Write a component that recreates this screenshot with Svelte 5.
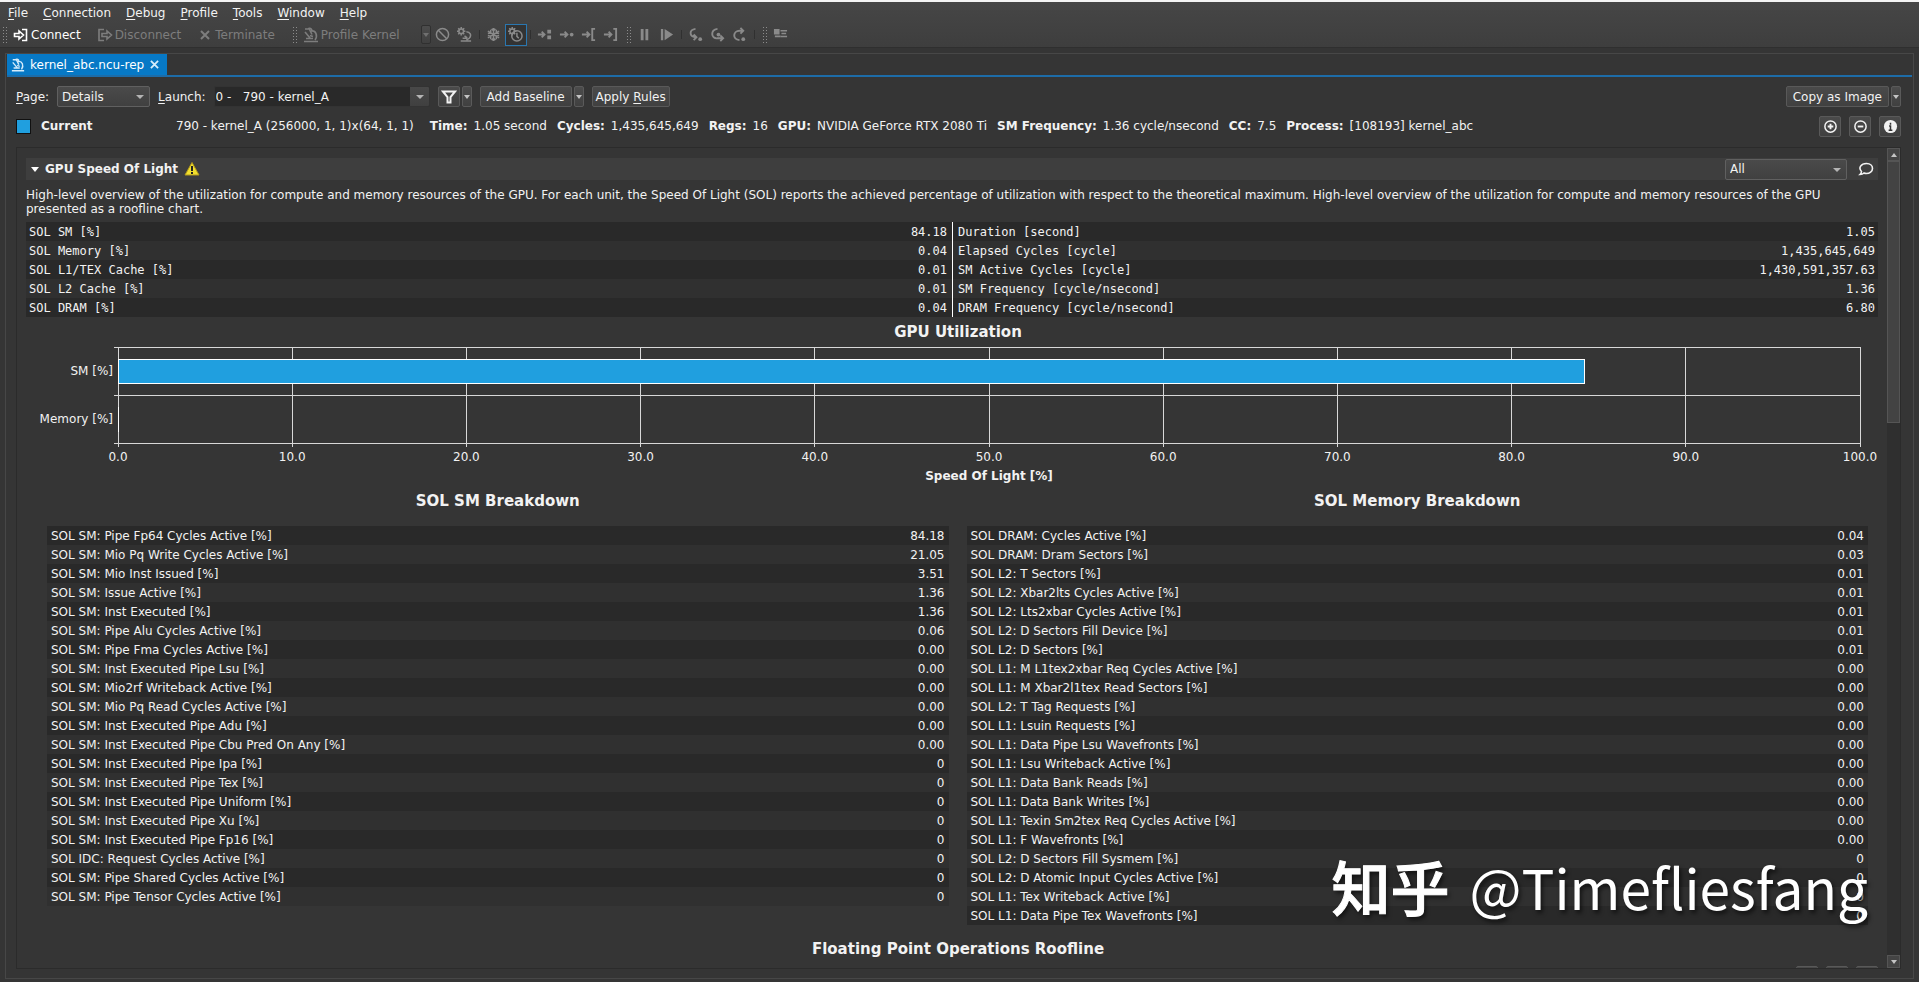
<script>
  const menus = ["File", "Connection", "Debug", "Profile", "Tools", "Window", "Help"];

  const info = [
    ["Time:", "1.05 second"],
    ["Cycles:", "1,435,645,649"],
    ["Regs:", "16"],
    ["GPU:", "NVIDIA GeForce RTX 2080 Ti"],
    ["SM Frequency:", "1.36 cycle/nsecond"],
    ["CC:", "7.5"],
    ["Process:", "[108193] kernel_abc"],
  ];

  const summary = [
    [
      ["SOL SM [%]", "84.18"],
      ["SOL Memory [%]", "0.04"],
      ["SOL L1/TEX Cache [%]", "0.01"],
      ["SOL L2 Cache [%]", "0.01"],
      ["SOL DRAM [%]", "0.04"],
    ],
    [
      ["Duration [second]", "1.05"],
      ["Elapsed Cycles [cycle]", "1,435,645,649"],
      ["SM Active Cycles [cycle]", "1,430,591,357.63"],
      ["SM Frequency [cycle/nsecond]", "1.36"],
      ["DRAM Frequency [cycle/nsecond]", "6.80"],
    ],
  ];

  const ticks = [0, 10, 20, 30, 40, 50, 60, 70, 80, 90, 100];
  const bars = [
    { label: "SM [%]", value: 84.18 },
    { label: "Memory [%]", value: 0.04 },
  ];

  const breakdowns = [
    {
      title: "SOL SM Breakdown",
      rows: [
        ["SOL SM: Pipe Fp64 Cycles Active [%]", "84.18"],
        ["SOL SM: Mio Pq Write Cycles Active [%]", "21.05"],
        ["SOL SM: Mio Inst Issued [%]", "3.51"],
        ["SOL SM: Issue Active [%]", "1.36"],
        ["SOL SM: Inst Executed [%]", "1.36"],
        ["SOL SM: Pipe Alu Cycles Active [%]", "0.06"],
        ["SOL SM: Pipe Fma Cycles Active [%]", "0.00"],
        ["SOL SM: Inst Executed Pipe Lsu [%]", "0.00"],
        ["SOL SM: Mio2rf Writeback Active [%]", "0.00"],
        ["SOL SM: Mio Pq Read Cycles Active [%]", "0.00"],
        ["SOL SM: Inst Executed Pipe Adu [%]", "0.00"],
        ["SOL SM: Inst Executed Pipe Cbu Pred On Any [%]", "0.00"],
        ["SOL SM: Inst Executed Pipe Ipa [%]", "0"],
        ["SOL SM: Inst Executed Pipe Tex [%]", "0"],
        ["SOL SM: Inst Executed Pipe Uniform [%]", "0"],
        ["SOL SM: Inst Executed Pipe Xu [%]", "0"],
        ["SOL SM: Inst Executed Pipe Fp16 [%]", "0"],
        ["SOL IDC: Request Cycles Active [%]", "0"],
        ["SOL SM: Pipe Shared Cycles Active [%]", "0"],
        ["SOL SM: Pipe Tensor Cycles Active [%]", "0"],
      ],
    },
    {
      title: "SOL Memory Breakdown",
      rows: [
        ["SOL DRAM: Cycles Active [%]", "0.04"],
        ["SOL DRAM: Dram Sectors [%]", "0.03"],
        ["SOL L2: T Sectors [%]", "0.01"],
        ["SOL L2: Xbar2lts Cycles Active [%]", "0.01"],
        ["SOL L2: Lts2xbar Cycles Active [%]", "0.01"],
        ["SOL L2: D Sectors Fill Device [%]", "0.01"],
        ["SOL L2: D Sectors [%]", "0.01"],
        ["SOL L1: M L1tex2xbar Req Cycles Active [%]", "0.00"],
        ["SOL L1: M Xbar2l1tex Read Sectors [%]", "0.00"],
        ["SOL L2: T Tag Requests [%]", "0.00"],
        ["SOL L1: Lsuin Requests [%]", "0.00"],
        ["SOL L1: Data Pipe Lsu Wavefronts [%]", "0.00"],
        ["SOL L1: Lsu Writeback Active [%]", "0.00"],
        ["SOL L1: Data Bank Reads [%]", "0.00"],
        ["SOL L1: Data Bank Writes [%]", "0.00"],
        ["SOL L1: Texin Sm2tex Req Cycles Active [%]", "0.00"],
        ["SOL L1: F Wavefronts [%]", "0.00"],
        ["SOL L2: D Sectors Fill Sysmem [%]", "0"],
        ["SOL L2: D Atomic Input Cycles Active [%]", "0"],
        ["SOL L1: Tex Writeback Active [%]", "0"],
        ["SOL L1: Data Pipe Tex Wavefronts [%]", "0"],
      ],
    },
  ];

  let page = $state("Details");
  let launch = $state("0");
  let filter = $state("All");
  let open = $state(true);
</script>

{#snippet scope()}
  <path d="M1 14.5h14M3 11.500h7M2 2h4M2 5l5 6M6 1.500l3 6M5 2c1-1 3-1 4 1M8 4c5-1 7 5 4 9M7 8.500l3 1" />
{/snippet}

{#snippet gears()}
  <circle cx="4.5" cy="4.5" r="2.5" />
  <path d="M4.500 0v2M4.500 7v2M0 4.500h2M7 4.500h2M1.300 1.300l1.500 1.500M6.200 6.200l1.500 1.500M7.700 1.300L6.200 2.800M1.300 7.700l1.500-1.500" />
{/snippet}

<div class="app">
  <header>
    <nav class="menu">
      {#each menus as m}
        <button><u>{m[0]}</u>{m.slice(1)}</button>
      {/each}
    </nav>
    <div class="toolbar">
      <span class="handle first"></span>
      <button class="tool on">
        <svg viewBox="0 0 16 16"><path d="M1.500 6.500H6V4l4.500 4L6 12V9.500H1.500zM9 2.500h4.500v11H9" /></svg>Connect
      </button>
      <button class="tool" disabled>
        <svg viewBox="0 0 16 16"><path d="M7 2.500H2v11h5M5 6.500h5V4l4.500 4-4.500 4V9.500H5z" /></svg>Disconnect
      </button>
      <button class="tool" disabled>
        <svg viewBox="0 0 16 16"><path class="thick" d="M4 4l8 8M12 4l-8 8" /></svg>Terminate
      </button>
      <span class="handle"></span>
      <button class="tool prof" disabled>
        <svg viewBox="0 0 16 16">{@render scope()}</svg>Profile Kernel
      </button>
      <button class="mini dim" disabled aria-label="Profile options"><i class="down"></i></button>
      <button class="icon" disabled aria-label="Disable">
        <svg viewBox="0 0 16 16"><circle cx="8" cy="8" r="6.500" /><path d="M3.500 3.500l9 9" /></svg>
      </button>
      <button class="icon" disabled aria-label="Profile series">
        <svg viewBox="0 0 16 16">{@render gears()}<path d="M4 15h11M6 12h5M10 5c4 0 6 4 3 7l-3 2M8 9.500l3 2" /></svg>
      </button>
      <span class="sep"></span>
      <button class="icon" disabled aria-label="Freeze">
        <svg viewBox="0 0 16 16"><path d="M8 1v14M2 4.500l12 7M14 4.500l-12 7M6 2l2 2 2-2M6 14l2-2 2 2M2 7l3-1V3M14 7l-3-1V3M2 9l3 1v3M14 9l-3 1v3" /></svg>
      </button>
      <button class="icon checked" disabled aria-label="Auto profile">
        <svg viewBox="0 0 16 16">{@render gears()}<circle cx="9.500" cy="9.500" r="5.500" /><path d="M9.500 6v4l2 2" /></svg>
      </button>
      <span class="sep"></span>
      <button class="icon" disabled aria-label="Run to next kernel">
        <svg viewBox="0 0 16 16"><path class="thick" d="M1 8h7M5 5l3 3-3 3" /><path class="fill" d="M11 3h4v4h-4zM11 9h4v4h-4z" /></svg>
      </button>
      <button class="icon" disabled aria-label="Run to next call">
        <svg viewBox="0 0 16 16"><path class="thick" d="M1 8h8M6 5l3 3-3 3" /><circle class="fill" cx="13.500" cy="8" r="2" /></svg>
      </button>
      <button class="icon" disabled aria-label="Run to range start">
        <svg viewBox="0 0 16 16"><path class="thick" d="M1 8h8M6 5l3 3-3 3M15 2h-3v12h3" /></svg>
      </button>
      <button class="icon" disabled aria-label="Run to range end">
        <svg viewBox="0 0 16 16"><path class="thick" d="M1 8h8M6 5l3 3-3 3M11 2h3v12h-3" /></svg>
      </button>
      <span class="handle"></span>
      <button class="icon" disabled aria-label="Pause">
        <svg viewBox="0 0 16 16"><path class="fill" d="M4 2h3v12H4zM9 2h3v12H9z" /></svg>
      </button>
      <button class="icon" disabled aria-label="Resume">
        <svg viewBox="0 0 16 16"><path class="fill" d="M2 2h2.500v12H2zM6 2l9 6-9 6z" /></svg>
      </button>
      <span class="sep"></span>
      <button class="icon" disabled aria-label="Step in">
        <svg viewBox="0 0 16 16"><path class="thick" d="M8 2C1 3 1 10 8 11M6 8l3 3-3 3" /><circle class="fill" cx="13" cy="13" r="2" /></svg>
      </button>
      <button class="icon" disabled aria-label="Step over">
        <svg viewBox="0 0 16 16"><path class="thick" d="M8 2C0 3 1 13 8 12h5M11 9l3 3-3 3" /><circle class="fill" cx="9" cy="8" r="2" /></svg>
      </button>
      <button class="icon" disabled aria-label="Step out">
        <svg viewBox="0 0 16 16"><path class="thick" d="M8 14C0 13 1 4 8 4h4M9 1l3 3-3 3" /><circle class="fill" cx="12" cy="13" r="2" /></svg>
      </button>
      <span class="sep"></span>
      <span class="handle"></span>
      <button class="icon" disabled aria-label="Resources">
        <svg viewBox="0 0 16 16"><path class="fill" d="M1 2h6v6H1zM2 9h6v2H2z" /><path d="M8 4h7M9 7h5M8 10h7" /></svg>
      </button>
    </div>
  </header>

  <main>
    <div class="tabs">
      <div class="tab">
        <svg viewBox="0 0 16 16">{@render scope()}</svg>
        <a href="#report">kernel_abc.ncu-rep</a>
        <button aria-label="Close tab">
          <svg viewBox="0 0 10 10"><path class="thick" d="M1 1l8 8M9 1l-8 8" /></svg>
        </button>
      </div>
    </div>

    <div class="controls">
      <label for="page"><u>P</u>age:</label>
      <span class="select page">
        <select id="page" bind:value={page}><option>Details</option></select>
      </span>
      <label for="launch"><u>L</u>aunch:</label>
      <span class="select launch">
        <select id="launch" bind:value={launch}>
          <option value="0">{"0 -\u00a0\u00a0 790 - kernel_A"}</option>
        </select>
      </span>
      <span class="split">
        <button class="btn square" aria-label="Filter">
          <svg viewBox="0 0 16 16"><path class="thick" d="M2 2.500h12L9.500 8v5.500h-3V8z" /></svg>
        </button>
        <button class="mini" aria-label="Filter options"><i class="down"></i></button>
      </span>
      <span class="split">
        <button class="btn baseline">Add Baseline</button>
        <button class="mini" aria-label="Baseline options"><i class="down"></i></button>
      </span>
      <button class="btn"><span>Apply <u>R</u>ules</span></button>
      <span class="split end">
        <button class="btn copy">Copy as Image</button>
        <button class="mini" aria-label="Copy options"><i class="down"></i></button>
      </span>
    </div>

    <div class="current">
      <span class="swatch"></span>
      <b class="name">Current</b>
      <span class="kernel">790 - kernel_A (256000, 1, 1)x(64, 1, 1)</span>
      {#each info as [key, value]}
        <span class="pair"><b>{key}</b><span>{value}</span></span>
      {/each}
      <div class="actions">
        <button class="btn square" aria-label="Expand all">
          <svg viewBox="0 0 16 16"><circle cx="8" cy="8" r="6" /><path class="thick" d="M8 5v6M5 8h6" /></svg>
        </button>
        <button class="btn square" aria-label="Collapse all">
          <svg viewBox="0 0 16 16"><circle cx="8" cy="8" r="6" /><path class="thick" d="M5 8h6" /></svg>
        </button>
        <button class="btn square" aria-label="Info">
          <svg viewBox="0 0 16 16"><circle class="fill" cx="8" cy="8" r="7" /><path class="ink" d="M8 4v2M6.500 7.500H8V12M6 12h4" /></svg>
        </button>
      </div>
    </div>

    <div class="area">
      <div class="content">
        <div class="section">
          <button class="title" aria-expanded={open} onclick={() => (open = !open)}>
            <svg class="arrow" viewBox="0 0 8 5"><path d="M0 0h8L4 5z" /></svg>
            GPU Speed Of Light
            <svg class="warn" viewBox="0 0 16 16">
              <path d="M8 1.500L15 14H1z" fill="#f2df2e" stroke="#b49a1c" stroke-linejoin="round" />
              <path d="M8 5v5M8 11v2" stroke="#222" stroke-width="2" />
            </svg>
          </button>
          <span class="select all">
            <select aria-label="View" bind:value={filter}><option>All</option></select>
          </span>
          <button class="comment" aria-label="Comments">
            <svg viewBox="0 0 16 16"><path d="M3.500 10.500C0 7 3 2.500 8.500 2.500c4 0 6 2.500 6 5 0 3-3 5-6 5-1 0-2-.2-2.500-.5-1 1-2.500 1.500-4 1.500 1-1 1.500-2 1.500-3z" /></svg>
          </button>
        </div>

        {#if open}
          <p>
            High-level overview of the utilization for compute and memory resources of the GPU. For each unit, the Speed Of Light (SOL) reports the achieved percentage of utilization with respect to the theoretical maximum. High-level overview of the utilization for compute and memory resources of the GPU presented as a roofline chart.
          </p>

          <div class="summary">
            {#each summary as rows}
              <table>
                <tbody>
                  {#each rows as [name, value]}
                    <tr><td>{name}</td><td class="num">{value}</td></tr>
                  {/each}
                </tbody>
              </table>
            {/each}
          </div>

          <h2 class="wide">GPU Utilization</h2>
          <div class="chart">
            <div class="labels">
              {#each bars as bar}<span>{bar.label}</span>{/each}
            </div>
            <svg class="plot" role="img" aria-label="GPU Utilization">
              {#each ticks as t}
                <line class="grid" x1="{t}%" x2="{t}%" y1="0" y2="100" />
                <text x="{t}%" y="114">{t.toFixed(1)}</text>
              {/each}
              {#each [0, 48, 96] as y}
                <line class="grid" x1="-4" x2="100%" y1={y} y2={y} />
              {/each}
              {#each bars as bar, i}
                <rect x="0" y={12 + i * 48} width="{bar.value}%" height="24" />
              {/each}
            </svg>
          </div>
          <h3>Speed Of Light [%]</h3>

          <div class="breakdowns">
            {#each breakdowns as b}
              <section>
                <h2>{b.title}</h2>
                <table>
                  <tbody>
                    {#each b.rows as [name, value]}
                      <tr><td>{name}</td><td class="num">{value}</td></tr>
                    {/each}
                  </tbody>
                </table>
              </section>
            {/each}
          </div>

          <h2 class="wide roofline">Floating Point Operations Roofline</h2>
          <div class="zoom">
            <button class="btn square" aria-label="Zoom in"></button>
            <button class="btn square" aria-label="Zoom out"></button>
            <button class="btn square" aria-label="Reset zoom"></button>
          </div>
        {/if}
      </div>
      <div class="scrollbar">
        <button aria-label="Scroll up"><i class="up"></i></button>
        <div class="track"><div class="thumb"></div></div>
        <button aria-label="Scroll down"><i class="down"></i></button>
      </div>
    </div>
  </main>

  <div class="watermark"><b>知乎</b><span>@Timefliesfang</span></div>
</div>

<style>
  :global(body) {
    background: #353535;
  }
  .app {
    display: flex;
    flex-direction: column;
    box-sizing: border-box;
    height: 100vh;
    overflow: hidden;
    border-top: 2px solid #f4f4f4;
    background: #353535;
    color: #f2f2f2;
    font: 12px/14px "DejaVu Sans", sans-serif;
  }
  button,
  select {
    font: inherit;
    color: inherit;
    margin: 0;
    padding: 0;
    border: 0;
    background: none;
    white-space: nowrap;
  }
  u {
    text-underline-offset: 2px;
  }
  svg {
    width: 16px;
    height: 16px;
    flex: none;
    fill: none;
    stroke: currentColor;
    stroke-width: 1.6;
  }
  .thick {
    stroke-width: 2;
  }
  .fill {
    fill: currentColor;
    stroke: none;
  }
  header {
    height: 45px;
    flex: none;
    background: linear-gradient(#464646, #3e3e3e);
    border-bottom: 1px solid #2f2f2f;
  }
  .menu {
    display: flex;
    gap: 15px;
    height: 21px;
    padding-left: 8px;
  }
  .toolbar {
    display: flex;
    align-items: center;
    height: 23px;
    color: #7d7d7d;
  }
  .handle {
    width: 5px;
    height: 17px;
    margin: 0 3px 0 4px;
    background: radial-gradient(circle, #8c8c8c 1px, transparent 1px) 0 0 / 3px 3px;
  }
  .handle.first {
    margin-left: 2px;
  }
  .tool {
    display: flex;
    align-items: center;
    gap: 2px;
    margin: 0 13px 0 3px;
  }
  .tool.on {
    color: #fff;
  }
  .tool.prof {
    margin-right: 21px;
  }
  .icon {
    display: flex;
    align-items: center;
    justify-content: center;
    box-sizing: border-box;
    width: 22px;
    height: 22px;
    color: #8a8a8a;
  }
  .icon svg {
    width: 15px;
    height: 15px;
  }
  .icon.checked {
    border: 1px solid #2a77b0;
    background: #333;
  }
  .sep {
    width: 1px;
    height: 9px;
    margin: 0 3px;
    background: #303030;
  }
  .mini {
    display: flex;
    align-items: center;
    justify-content: center;
    box-sizing: border-box;
    width: 10px;
    height: 21px;
    border: 1px solid #5a5a5a;
    border-radius: 2px;
    background: linear-gradient(#4c4c4c, #404040);
  }
  .mini.dim {
    height: 19px;
    border-color: #303030;
    margin-right: 1px;
  }
  .down,
  .up {
    border: 3px solid transparent;
    border-top: 4px solid #c4c4c4;
    border-bottom: 0;
  }
  .up {
    border-top: 0;
    border-bottom: 4px solid #c4c4c4;
  }
  .dim .down {
    border-top-color: #707070;
  }

  main {
    display: flex;
    flex: 1;
    flex-direction: column;
    min-height: 0;
    margin: 5px 5px 3px;
    border: 1px solid #474747;
    padding: 0 12px 9px 10px;
  }
  .tabs {
    display: flex;
    margin: 0 -11px 0 -9px;
    border-bottom: 2px solid #1d6ca8;
  }
  .tab {
    display: flex;
    align-items: center;
    height: 21px;
    padding: 0 8px 0 4px;
    background: #0779c6;
  }
  .tab svg {
    width: 14px;
    height: 14px;
    stroke: #d5ecfb;
  }
  .tab a {
    margin: 0 6px 0 5px;
    color: #fff;
    text-decoration: none;
  }
  .tab button {
    display: flex;
  }
  .tab button svg {
    width: 9px;
    height: 9px;
  }
  .controls {
    display: flex;
    align-items: center;
    gap: 8px;
    margin-top: 9px;
    height: 21px;
  }
  .btn {
    display: flex;
    align-items: center;
    justify-content: center;
    box-sizing: border-box;
    height: 21px;
    padding: 0 3px;
    border: 1px solid #595959;
    border-radius: 2px;
    background: linear-gradient(#4a4a4a, #404040);
  }
  .btn.square {
    width: 22px;
    padding: 0;
  }
  .btn.baseline,
  .btn.copy {
    padding: 0 6px;
  }
  .btn .ink {
    stroke: #333;
  }
  .current svg {
    width: 15px;
    height: 15px;
  }
  .split {
    display: flex;
    gap: 2px;
  }
  .split.end {
    margin-left: auto;
  }
  .select {
    position: relative;
    display: flex;
  }
  .select::after {
    content: "";
    position: absolute;
    right: 6px;
    top: 9px;
    border: 4px solid transparent;
    border-top-color: #b4b4b4;
    border-bottom: 0;
    pointer-events: none;
  }
  select {
    appearance: none;
    box-sizing: border-box;
    width: 100%;
    height: 21px;
    padding: 0 4px;
    border: 1px solid #606060;
    border-radius: 2px;
    background: linear-gradient(#4a4a4a, #404040);
  }
  .page {
    width: 93px;
  }
  .launch {
    width: 216px;
  }
  .launch select {
    padding-left: 1px;
    border-color: #333;
    background: linear-gradient(#484848, #404040) right / 19px 100% no-repeat #292929;
  }

  .current {
    display: flex;
    align-items: center;
    height: 22px;
    margin-top: 8px;
    white-space: nowrap;
  }
  .swatch {
    box-sizing: border-box;
    width: 15px;
    height: 15px;
    border: 1px solid #111;
    background: #209fdf;
  }
  .name {
    width: 135px;
    margin-left: 10px;
  }
  .kernel {
    margin-right: 6px;
  }
  .pair {
    display: flex;
    gap: 6px;
    margin-left: 10px;
  }
  .actions {
    display: flex;
    gap: 8px;
    margin-left: auto;
  }

  .area {
    display: flex;
    flex: 1;
    min-height: 0;
    margin-top: 10px;
    border: 1px solid #2b2b2b;
  }
  .content {
    flex: 1;
    min-width: 0;
    padding: 10px 9px 0;
    overflow: hidden;
  }
  .section {
    display: flex;
    align-items: center;
    height: 22px;
    background: #3e3e3e;
  }
  .title {
    display: flex;
    flex: 1;
    align-items: center;
    padding-left: 5px;
    font-weight: bold;
  }
  .title .arrow {
    width: 8px;
    height: 5px;
    margin-right: 6px;
    fill: #fff;
    stroke: none;
  }
  .warn {
    margin-left: 6px;
    stroke-width: 1;
  }
  .all {
    width: 122px;
  }
  .comment {
    display: flex;
    padding: 0 4px 0 11px;
  }
  p {
    margin: 8px 0 6px;
  }
  .summary {
    display: grid;
    grid-template-columns: 1fr 1fr;
    font-family: "DejaVu Sans Mono", monospace;
  }
  .summary table + table {
    border-left: 1px solid #fff;
  }
  .summary td {
    padding: 0 5px 0 3px;
  }
  .summary table + table td {
    padding: 0 3px 0 5px;
  }
  table {
    width: 100%;
    border-collapse: separate;
    border-spacing: 0;
  }
  tr {
    height: 19px;
    background: #303030;
  }
  tr:nth-child(odd) {
    background: #292929;
  }
  td {
    padding: 0 4px;
    white-space: nowrap;
  }
  .num {
    text-align: right;
  }
  h2 {
    margin: 0;
    font-size: 15px;
    line-height: 18px;
    text-align: center;
  }
  h2.wide {
    padding-left: 12px;
  }
  h3 {
    margin: 0 18px 0 92px;
    font-size: 12px;
    line-height: 14px;
    text-align: center;
  }
  .summary + h2 {
    margin: 6px 0 6px;
  }
  .chart {
    display: flex;
    height: 122px;
    padding-right: 18px;
  }
  .labels {
    display: flex;
    flex-direction: column;
    width: 92px;
  }
  .labels span {
    height: 48px;
    padding-right: 5px;
    line-height: 48px;
    text-align: right;
  }
  .plot {
    flex: 1;
    height: 122px;
    overflow: visible;
    stroke: none;
  }
  .plot .grid {
    stroke: #d8d8d8;
    stroke-width: 1;
    shape-rendering: crispEdges;
  }
  .plot rect {
    fill: #209fdf;
    stroke: #fff;
    stroke-width: 1;
    shape-rendering: crispEdges;
  }
  .plot text {
    fill: #f2f2f2;
    text-anchor: middle;
  }
  .breakdowns {
    display: grid;
    grid-template-columns: 1fr 1fr;
    gap: 18px;
    align-items: start;
    margin: 9px 10px 0 21px;
  }
  .breakdowns h2 {
    margin-bottom: 16px;
  }
  .roofline {
    margin-top: 15px;
  }
  .zoom {
    display: flex;
    justify-content: flex-end;
    gap: 8px;
    margin-top: 8px;
  }

  .scrollbar {
    display: flex;
    flex-direction: column;
    width: 13px;
    background: #2f2f2f;
  }
  .scrollbar button {
    display: flex;
    align-items: center;
    justify-content: center;
    box-sizing: border-box;
    height: 13px;
    border: 1px solid #555;
    background: #444;
  }
  .track {
    flex: 1;
  }
  .thumb {
    box-sizing: border-box;
    height: 33%;
    border: 1px solid #555;
    background: #434343;
  }
  .watermark {
    position: absolute;
    right: 51px;
    bottom: 58px;
    display: flex;
    align-items: center;
    gap: 20px;
    color: #fff;
    font: 55px/76px "Noto Sans CJK SC", sans-serif;
    text-shadow: 2px 3px 4px rgba(0, 0, 0, 0.6);
    pointer-events: none;
  }
  .watermark b {
    font-size: 59px;
    font-weight: 500;
    -webkit-text-stroke: 1px #fff;
  }
</style>
